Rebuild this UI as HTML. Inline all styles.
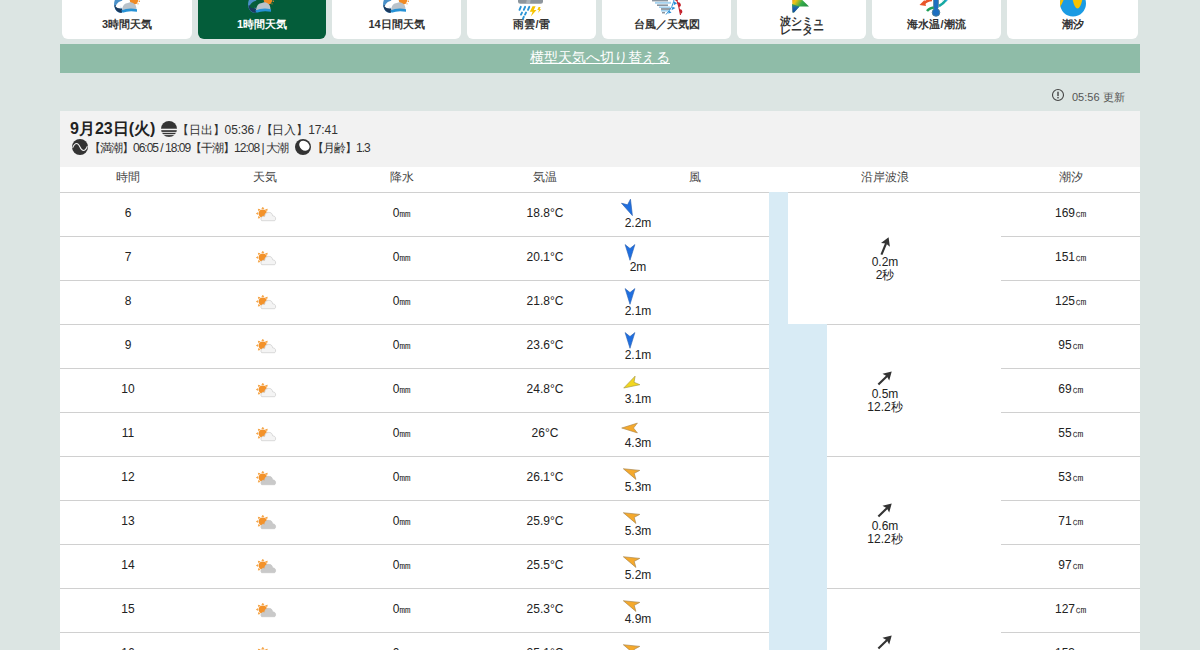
<!DOCTYPE html>
<html><head><meta charset="utf-8">
<style>
*{box-sizing:border-box;margin:0;padding:0}
html,body{width:1200px;height:650px;overflow:hidden;background:#dce5e3;font-family:"Liberation Sans",sans-serif;color:#222}
.wrap{position:absolute;left:60px;top:0;width:1080px;height:650px}
.tab{position:absolute;top:-40px;width:130px;height:79px;background:#fff;border-radius:6px;text-align:center;overflow:hidden}
.tab .lbl{position:absolute;left:0;right:0;top:57px;font-size:11px;font-weight:bold;color:#333;line-height:14px}
.tab .ico{position:absolute;left:50%;top:13px;transform:translateX(-50%);line-height:0}
.tab.on{background:#045d3a}
.tab.on .lbl{color:#fff}
.switch{position:absolute;left:0;top:44px;width:1080px;height:29px;background:#8fbca8;text-align:center}
.switch span{color:#fff;font-size:14px;line-height:26px;text-decoration:underline}
.upd{position:absolute;left:1012px;top:91px;font-size:11px;color:#555;line-height:13px}
.info{position:absolute;left:991px;top:88px}
.hdr{position:absolute;left:0;top:111px;width:1080px;height:56px;background:#f2f2f2}
.d1{position:absolute;left:10px;top:120px;font-size:16px;font-weight:bold;color:#222;line-height:18px}
.d1s{position:absolute;left:117px;top:123px;font-size:12px;color:#333;line-height:14px;white-space:nowrap;letter-spacing:-0.1px}
.d2{position:absolute;left:29px;top:141px;font-size:12px;color:#333;line-height:14px;letter-spacing:-1px;white-space:nowrap}
.tbl{position:absolute;left:0;top:167px;width:1080px;height:500px;background:#fff}
.th{position:absolute;top:167px;font-size:12px;color:#444;line-height:20px;text-align:center}
.c{position:absolute;height:44px;line-height:43px;text-align:center;font-size:12px;color:#222}
.ic{position:absolute;width:24px;height:16px;line-height:0}
.wa{position:absolute}
.ws{position:absolute;font-size:12px;line-height:14px;color:#222;width:100px;text-align:center}
.ln{position:absolute;height:1px;background:#d0d0d0}
.wb{position:absolute;background:#d8ebf5}
.wv{position:absolute;text-align:center;font-size:12px;line-height:12.5px;color:#222}
.warr{position:absolute}
</style></head><body>
<div class="wrap">
  <div class="tab" style="left:2px;width:130px"><div class="lbl" style="">3時間天気</div></div><div class="tab on" style="left:138px;width:128px"><div class="lbl" style="">1時間天気</div></div><div class="tab" style="left:272px;width:129px"><div class="lbl" style="">14日間天気</div></div><div class="tab" style="left:407px;width:129px"><div class="lbl" style="">雨雲/雷</div></div><div class="tab" style="left:542px;width:129px"><div class="lbl" style="">台風／天気図</div></div><div class="tab" style="left:677px;width:129px"><div class="lbl" style="line-height:9px;top:57px">波シミュ<br>レーター</div></div><div class="tab" style="left:812px;width:129px"><div class="lbl" style="">海水温/潮流</div></div><div class="tab" style="left:947px;width:131px"><div class="lbl" style="">潮汐</div></div><div style="position:absolute;left:53px;top:-14px;line-height:0"><svg width="28" height="30" viewBox="0 0 28 30"><path d="M8 8 Q0 12 1.2 20.5 Q2.5 26.5 8.5 27 L10 23.5 Q7.5 22 7.5 18.5 Q7.5 15 11.5 12.5 L12 9Z" fill="#4a90c8"/><path d="M1.3 19.5 Q2.5 26.5 8.5 27 L10 23.5 Q6.5 22.5 5.5 19Z" fill="#1b3a5e"/><path d="M2.5 20.5 Q4.5 14.5 11.5 14.5 Q7.5 17.5 7.8 22.5 Q4 22.5 2.5 20.5Z" fill="#ffffff"/><g fill="#f08a24"><circle cx="21" cy="14.2" r="4.2"/><circle cx="26" cy="12.3" r="0.7"/><circle cx="26.3" cy="15.2" r="0.7"/><circle cx="25" cy="17.8" r="0.6"/></g><path d="M9 24 Q9.8 17.2 15 17 Q17.5 15.2 20.5 17.2 Q23.5 18.5 23.5 24Z" fill="#b9c2ca"/><path d="M8.2 24.6 Q15.5 21.2 24 23.2 L24 25.8 Q16 24.2 9.6 26.8Z" fill="#2692d6"/></svg></div><div style="position:absolute;left:187px;top:-14px;line-height:0"><svg width="28" height="30" viewBox="0 0 28 30"><path d="M8 8 Q0 12 1.2 20.5 Q2.5 26.5 8.5 27 L10 23.5 Q7.5 22 7.5 18.5 Q7.5 15 11.5 12.5 L12 9Z" fill="#4a90c8"/><path d="M1.3 19.5 Q2.5 26.5 8.5 27 L10 23.5 Q6.5 22.5 5.5 19Z" fill="#1b3a5e"/><path d="M2.5 20.5 Q4.5 14.5 11.5 14.5 Q7.5 17.5 7.8 22.5 Q4 22.5 2.5 20.5Z" fill="#075e3b"/><g fill="#f08a24"><circle cx="21" cy="14.2" r="4.2"/><circle cx="26" cy="12.3" r="0.7"/><circle cx="26.3" cy="15.2" r="0.7"/><circle cx="25" cy="17.8" r="0.6"/></g><path d="M9 24 Q9.8 17.2 15 17 Q17.5 15.2 20.5 17.2 Q23.5 18.5 23.5 24Z" fill="#b9c2ca"/><path d="M8.2 24.6 Q15.5 21.2 24 23.2 L24 25.8 Q16 24.2 9.6 26.8Z" fill="#2692d6"/></svg></div><div style="position:absolute;left:322px;top:-14px;line-height:0"><svg width="28" height="30" viewBox="0 0 28 30"><path d="M8 8 Q0 12 1.2 20.5 Q2.5 26.5 8.5 27 L10 23.5 Q7.5 22 7.5 18.5 Q7.5 15 11.5 12.5 L12 9Z" fill="#4a90c8"/><path d="M1.3 19.5 Q2.5 26.5 8.5 27 L10 23.5 Q6.5 22.5 5.5 19Z" fill="#1b3a5e"/><path d="M2.5 20.5 Q4.5 14.5 11.5 14.5 Q7.5 17.5 7.8 22.5 Q4 22.5 2.5 20.5Z" fill="#ffffff"/><g fill="#f08a24"><circle cx="21" cy="14.2" r="4.2"/><circle cx="26" cy="12.3" r="0.7"/><circle cx="26.3" cy="15.2" r="0.7"/><circle cx="25" cy="17.8" r="0.6"/></g><path d="M9 24 Q9.8 17.2 15 17 Q17.5 15.2 20.5 17.2 Q23.5 18.5 23.5 24Z" fill="#b9c2ca"/><path d="M8.2 24.6 Q15.5 21.2 24 23.2 L24 25.8 Q16 24.2 9.6 26.8Z" fill="#2692d6"/></svg></div><div style="position:absolute;left:455px;top:-13px;line-height:0"><svg width="32" height="34" viewBox="0 0 32 34"><rect x="3" y="0" width="25" height="16.7" rx="2.5" fill="#8e969d"/><path d="M14 0 L18 0 L15 16.7 L11 16.7Z" fill="#b6bec5" opacity=".7"/><g stroke="#2a93d5" stroke-width="1.9" stroke-linecap="round"><line x1="4.5" y1="22.8" x2="5.8" y2="19.8"/><line x1="8.8" y1="22.8" x2="10.1" y2="19.8"/><line x1="13" y1="22.8" x2="14.3" y2="19.8"/><line x1="6" y1="27.6" x2="7" y2="25.6"/><line x1="10" y1="27.6" x2="11" y2="25.6"/><line x1="8" y1="31.6" x2="8.8" y2="29.8"/></g><path d="M17.5 19.3 L14.8 24.8 L17.6 24.8 L15.8 29.5 L21.5 23 L18.8 23 L20.6 19.3Z" fill="#f7c400"/><path d="M23.6 20 L22.3 23 L24 23 L23 26 L26.2 22.2 L24.6 22.2 L25.6 20Z" fill="#f7c400"/></svg></div><div style="position:absolute;left:590px;top:-15px;line-height:0"><svg width="36" height="32" viewBox="0 0 36 32"><g stroke-linecap="butt"><line x1="0" y1="11" x2="17" y2="11" stroke="#a6d2ee" stroke-width="2"/><line x1="1" y1="13.5" x2="17" y2="13.5" stroke="#8a959f" stroke-width="1.8"/><line x1="5" y1="17.8" x2="21" y2="17.8" stroke="#a6d2ee" stroke-width="2"/><line x1="2" y1="15.6" x2="18" y2="15.6" stroke="#8a959f" stroke-width="1.6"/><line x1="7" y1="20.2" x2="18" y2="20.2" stroke="#8a959f" stroke-width="1.6"/><line x1="9" y1="22.2" x2="20" y2="22.2" stroke="#a6d2ee" stroke-width="1.6"/><line x1="11" y1="24" x2="20" y2="24" stroke="#8a959f" stroke-width="1.8"/><line x1="11" y1="25.8" x2="19" y2="25.8" stroke="#a6d2ee" stroke-width="1.6"/><line x1="12" y1="27.7" x2="15" y2="27.7" stroke="#8a959f" stroke-width="1.5"/></g><path d="M24.5 12 Q23.5 22 16 29.5" stroke="#2a8fd6" stroke-width="1" fill="none"/><path d="M24 16.5 L27.2 18.2 L23.8 20.2Z M22.5 21.8 L25.5 23 L21.5 25.2Z M19.5 25.8 L21.5 27.8 L18 28.5Z" fill="#2a8fd6"/><path d="M25.5 12 Q29 20 30.5 30" stroke="#c4202a" stroke-width="1.1" fill="none"/><path d="M27.6 17.5 A2.3 2.3 0 0 1 29.2 22 Z" fill="#c4202a"/><path d="M29.6 24.3 A2.3 2.3 0 0 1 30.4 29 Z" fill="#c4202a"/><circle cx="26.5" cy="14.5" r="1.5" fill="#c4202a"/></svg></div><div style="position:absolute;left:730px;top:-14px;line-height:0"><svg width="22" height="28" viewBox="0 0 22 28"><defs><linearGradient id="gw" x1="0" y1="0" x2="1" y2="0.9"><stop offset="0" stop-color="#f0562a"/><stop offset="0.35" stop-color="#f3c315"/><stop offset="0.6" stop-color="#35ad4a"/><stop offset="1" stop-color="#1b7a3c"/></linearGradient><linearGradient id="gb" x1="0" y1="0" x2="0" y2="1"><stop offset="0" stop-color="#35ad4a"/><stop offset="0.45" stop-color="#1e5fb0"/><stop offset="1" stop-color="#0f4c9c"/></linearGradient></defs><path d="M2 4 L19 20.5 L9.5 20.5 L4 26.5 L2.5 26.5 Z" fill="url(#gw)"/><path d="M2 18 L9.5 20.5 L4 26.5 L2.5 26.5 Z" fill="url(#gb)"/></svg></div><div style="position:absolute;left:854px;top:-13px;line-height:0"><svg width="42" height="34" viewBox="0 0 42 34"><path d="M9.5 17 Q13 13 18 13" stroke="#e9552a" stroke-width="2.6" fill="none"/><path d="M5.5 18 L10.5 13 L12 19Z" fill="#e9552a"/><path d="M13 24 Q16 20.5 21 20.5" stroke="#22a05a" stroke-width="2.6" fill="none"/><path d="M25 19 Q29 17 32 13" stroke="#17a9a2" stroke-width="2.6" fill="none"/><path d="M28 12 Q32 11 34 8" stroke="#2aa8e0" stroke-width="2.6" fill="none"/><path d="M31.5 15 L38.5 9.5 L33 7.5Z" fill="#2aa8e0"/><rect x="19.6" y="0" width="4.8" height="22" rx="2.2" fill="#1c6fc2" stroke="#4d7d94" stroke-width="0.8"/><circle cx="22" cy="25.5" r="3.8" fill="#1c6fc2" stroke="#4d7d94" stroke-width="0.9"/><rect x="20.3" y="18" width="3.4" height="6" fill="#1c6fc2"/></svg></div><div style="position:absolute;left:999px;top:-13px;line-height:0"><svg width="28" height="30" viewBox="0 0 28 30"><defs><clipPath id="ct"><circle cx="14" cy="16.5" r="13"/></clipPath></defs><circle cx="14" cy="16.5" r="13" fill="#1a9be3"/><g clip-path="url(#ct)"><path d="M0 0 L0 22 Q3 17 5 12 Q7 4 9.5 4 Q11.5 4 13.5 12 Q15.5 21.5 18.5 21.5 Q21.5 21.5 23.5 12 Q25 6 28 2 L28 0Z" fill="#f7c200"/></g></svg></div>
  <div class="switch"><span>横型天気へ切り替える</span></div>
  <svg class="info" width="14" height="14" viewBox="0 0 14 14"><circle cx="7" cy="7" r="5.5" fill="none" stroke="#444" stroke-width="1.1"/><rect x="6.3" y="3.7" width="1.4" height="4.4" fill="#444"/><rect x="6.3" y="9" width="1.4" height="1.4" fill="#444"/></svg>
  <div class="upd">05:56 更新</div>
  <div class="hdr"></div>
  <div class="d1">9月23日(火)</div>
  <svg style="position:absolute;left:101px;top:121px" width="16" height="16" viewBox="0 0 16 16"><defs><clipPath id="cc"><circle cx="8" cy="8" r="8"/></clipPath></defs><g clip-path="url(#cc)" fill="#333"><rect x="0" y="0" width="16" height="7.7"/><rect x="0" y="9.2" width="16" height="1.7"/><rect x="0" y="11.8" width="16" height="1.4"/><rect x="0" y="14.1" width="16" height="1.8"/></g></svg>
  <div class="d1s">【日出】05:36 /【日入】17:41</div>
  <svg style="position:absolute;left:12px;top:139px" width="16" height="16" viewBox="0 0 16 16"><circle cx="8" cy="8" r="8" fill="#333"/><path d="M0.6 8.8 Q2.5 4.5 4.5 4.5 Q6.5 4.5 8 8 Q9.5 11.5 11.5 11.5 Q13.5 11.5 15.4 7.2" stroke="#f2f2f2" stroke-width="1.1" fill="none"/></svg>
  <div class="d2">【満潮】06:05 / 18:09【干潮】12:08 | 大潮</div>
  <svg style="position:absolute;left:235px;top:139px" width="16" height="16" viewBox="0 0 16 16"><circle cx="8" cy="8" r="8" fill="#333"/><ellipse cx="9.4" cy="6.7" rx="5.6" ry="4.5" transform="rotate(40 9.4 6.7)" fill="#fff"/></svg>
  <div class="d2" style="left:252px">【月齢】1.3</div>
  <div class="tbl"></div>
  <div class="th" style="left:0;width:136px">時間</div>
  <div class="th" style="left:136px;width:138px">天気</div>
  <div class="th" style="left:274px;width:136px">降水</div>
  <div class="th" style="left:410px;width:150px">気温</div>
  <div class="th" style="left:560px;width:149px">風</div>
  <div class="th" style="left:709px;width:232px">沿岸波浪</div>
  <div class="th" style="left:941px;width:139px">潮汐</div>
  <div class="ln" style="left:0;width:1080px;top:192px"></div>
  <div class="wb" style="left:709px;top:192px;width:19px;height:132px"></div><svg class="warr" style="left:813.4px;top:233.5px" width="24" height="24" viewBox="-12 -12 24 24"><g transform="rotate(22.5)"><path d="M0,9.3 L0,-3" stroke="#333" stroke-width="2.1" fill="none"/><path d="M0,-9.4 L4.8,-1.2 L0,-2.6 L-4.8,-1.2 Z" fill="#333"/></g></svg><div class="wv" style="left:709px;width:232px;top:256px">0.2m<br>2秒</div><div class="ln" style="left:709px;width:232px;top:324px"></div><div class="wb" style="left:709px;top:324px;width:58px;height:132px"></div><svg class="warr" style="left:813.4px;top:365.5px" width="24" height="24" viewBox="-12 -12 24 24"><g transform="rotate(45.5)"><path d="M0,9.3 L0,-3" stroke="#333" stroke-width="2.1" fill="none"/><path d="M0,-9.4 L4.8,-1.2 L0,-2.6 L-4.8,-1.2 Z" fill="#333"/></g></svg><div class="wv" style="left:709px;width:232px;top:388px">0.5m<br>12.2秒</div><div class="ln" style="left:709px;width:232px;top:456px"></div><div class="wb" style="left:709px;top:456px;width:58px;height:132px"></div><svg class="warr" style="left:813.4px;top:497.5px" width="24" height="24" viewBox="-12 -12 24 24"><g transform="rotate(45.5)"><path d="M0,9.3 L0,-3" stroke="#333" stroke-width="2.1" fill="none"/><path d="M0,-9.4 L4.8,-1.2 L0,-2.6 L-4.8,-1.2 Z" fill="#333"/></g></svg><div class="wv" style="left:709px;width:232px;top:520px">0.6m<br>12.2秒</div><div class="ln" style="left:709px;width:232px;top:588px"></div><div class="wb" style="left:709px;top:588px;width:58px;height:132px"></div><svg class="warr" style="left:813.4px;top:629.5px" width="24" height="24" viewBox="-12 -12 24 24"><g transform="rotate(45.5)"><path d="M0,9.3 L0,-3" stroke="#333" stroke-width="2.1" fill="none"/><path d="M0,-9.4 L4.8,-1.2 L0,-2.6 L-4.8,-1.2 Z" fill="#333"/></g></svg><div class="wv" style="left:709px;width:232px;top:652px">0.6m<br>12.2秒</div><div class="ln" style="left:709px;width:232px;top:720px"></div>
  <div class="c t" style="left:0;width:136px;top:192px">6</div><div class="ic" style="left:195px;top:207px"><svg width="24" height="16" viewBox="0 0 24 16"><g fill="#f5a649"><path d="M14.80,6.60 L12.40,8.10 L12.40,5.10Z"/><path d="M12.75,11.55 L9.99,10.91 L12.11,8.79Z"/><path d="M7.80,13.60 L6.30,11.20 L9.30,11.20Z"/><path d="M2.85,11.55 L3.49,8.79 L5.61,10.91Z"/><path d="M0.80,6.60 L3.20,5.10 L3.20,8.10Z"/><path d="M2.85,1.65 L5.61,2.29 L3.49,4.41Z"/><path d="M7.80,-0.40 L9.30,2.00 L6.30,2.00Z"/><path d="M12.75,1.65 L12.11,4.41 L9.99,2.29Z"/></g><circle cx="7.8" cy="6.6" r="4.1" fill="#f3922a"/><path d="M6.6 13.7 A2.7 2.7 0 0 1 9.6 9.4 A4.02 4.02 0 0 1 17.6 8.8 A2.8 2.8 0 0 1 19.7 13.7 Z" fill="#f4f4f4" stroke="#cdcdcd" stroke-width="0.7"/></svg></div><div class="c t" style="left:274px;width:136px;top:192px">0㎜</div><div class="c t" style="left:410px;width:150px;top:192px">18.8°C</div><svg class="wa" style="left:559.2px;top:198px" width="20" height="20" viewBox="-10 -10 20 20"><path d="M0,-8.3 L4.9,7.4 L0,3.5 L-4.9,7.4 Z" fill="#1f6fe0" stroke="#2a5fae" stroke-width="0.6" stroke-linejoin="round" transform="rotate(156)"/></svg><div class="ws" style="left:528px;top:216px">2.2m</div><div class="c t" style="left:942px;width:138px;top:192px">169㎝</div><div class="ln" style="left:0;width:709px;top:236px"></div><div class="ln" style="left:941px;width:139px;top:236px"></div><div class="c t" style="left:0;width:136px;top:236px">7</div><div class="ic" style="left:195px;top:251px"><svg width="24" height="16" viewBox="0 0 24 16"><g fill="#f5a649"><path d="M14.80,6.60 L12.40,8.10 L12.40,5.10Z"/><path d="M12.75,11.55 L9.99,10.91 L12.11,8.79Z"/><path d="M7.80,13.60 L6.30,11.20 L9.30,11.20Z"/><path d="M2.85,11.55 L3.49,8.79 L5.61,10.91Z"/><path d="M0.80,6.60 L3.20,5.10 L3.20,8.10Z"/><path d="M2.85,1.65 L5.61,2.29 L3.49,4.41Z"/><path d="M7.80,-0.40 L9.30,2.00 L6.30,2.00Z"/><path d="M12.75,1.65 L12.11,4.41 L9.99,2.29Z"/></g><circle cx="7.8" cy="6.6" r="4.1" fill="#f3922a"/><path d="M6.6 13.7 A2.7 2.7 0 0 1 9.6 9.4 A4.02 4.02 0 0 1 17.6 8.8 A2.8 2.8 0 0 1 19.7 13.7 Z" fill="#f4f4f4" stroke="#cdcdcd" stroke-width="0.7"/></svg></div><div class="c t" style="left:274px;width:136px;top:236px">0㎜</div><div class="c t" style="left:410px;width:150px;top:236px">20.1°C</div><svg class="wa" style="left:559.5px;top:242px" width="20" height="20" viewBox="-10 -10 20 20"><path d="M0,-8.3 L4.9,7.4 L0,3.5 L-4.9,7.4 Z" fill="#1f6fe0" stroke="#2a5fae" stroke-width="0.6" stroke-linejoin="round" transform="rotate(180)"/></svg><div class="ws" style="left:528px;top:260px">2m</div><div class="c t" style="left:942px;width:138px;top:236px">151㎝</div><div class="ln" style="left:0;width:709px;top:280px"></div><div class="ln" style="left:941px;width:139px;top:280px"></div><div class="c t" style="left:0;width:136px;top:280px">8</div><div class="ic" style="left:195px;top:295px"><svg width="24" height="16" viewBox="0 0 24 16"><g fill="#f5a649"><path d="M14.80,6.60 L12.40,8.10 L12.40,5.10Z"/><path d="M12.75,11.55 L9.99,10.91 L12.11,8.79Z"/><path d="M7.80,13.60 L6.30,11.20 L9.30,11.20Z"/><path d="M2.85,11.55 L3.49,8.79 L5.61,10.91Z"/><path d="M0.80,6.60 L3.20,5.10 L3.20,8.10Z"/><path d="M2.85,1.65 L5.61,2.29 L3.49,4.41Z"/><path d="M7.80,-0.40 L9.30,2.00 L6.30,2.00Z"/><path d="M12.75,1.65 L12.11,4.41 L9.99,2.29Z"/></g><circle cx="7.8" cy="6.6" r="4.1" fill="#f3922a"/><path d="M6.6 13.7 A2.7 2.7 0 0 1 9.6 9.4 A4.02 4.02 0 0 1 17.6 8.8 A2.8 2.8 0 0 1 19.7 13.7 Z" fill="#f4f4f4" stroke="#cdcdcd" stroke-width="0.7"/></svg></div><div class="c t" style="left:274px;width:136px;top:280px">0㎜</div><div class="c t" style="left:410px;width:150px;top:280px">21.8°C</div><svg class="wa" style="left:559.5px;top:286px" width="20" height="20" viewBox="-10 -10 20 20"><path d="M0,-8.3 L4.9,7.4 L0,3.5 L-4.9,7.4 Z" fill="#1f6fe0" stroke="#2a5fae" stroke-width="0.6" stroke-linejoin="round" transform="rotate(180)"/></svg><div class="ws" style="left:528px;top:304px">2.1m</div><div class="c t" style="left:942px;width:138px;top:280px">125㎝</div><div class="ln" style="left:0;width:709px;top:324px"></div><div class="ln" style="left:941px;width:139px;top:324px"></div><div class="c t" style="left:0;width:136px;top:324px">9</div><div class="ic" style="left:195px;top:339px"><svg width="24" height="16" viewBox="0 0 24 16"><g fill="#f5a649"><path d="M14.80,6.60 L12.40,8.10 L12.40,5.10Z"/><path d="M12.75,11.55 L9.99,10.91 L12.11,8.79Z"/><path d="M7.80,13.60 L6.30,11.20 L9.30,11.20Z"/><path d="M2.85,11.55 L3.49,8.79 L5.61,10.91Z"/><path d="M0.80,6.60 L3.20,5.10 L3.20,8.10Z"/><path d="M2.85,1.65 L5.61,2.29 L3.49,4.41Z"/><path d="M7.80,-0.40 L9.30,2.00 L6.30,2.00Z"/><path d="M12.75,1.65 L12.11,4.41 L9.99,2.29Z"/></g><circle cx="7.8" cy="6.6" r="4.1" fill="#f3922a"/><path d="M6.6 13.7 A2.7 2.7 0 0 1 9.6 9.4 A4.02 4.02 0 0 1 17.6 8.8 A2.8 2.8 0 0 1 19.7 13.7 Z" fill="#f4f4f4" stroke="#cdcdcd" stroke-width="0.7"/></svg></div><div class="c t" style="left:274px;width:136px;top:324px">0㎜</div><div class="c t" style="left:410px;width:150px;top:324px">23.6°C</div><svg class="wa" style="left:559.5px;top:330px" width="20" height="20" viewBox="-10 -10 20 20"><path d="M0,-8.3 L4.9,7.4 L0,3.5 L-4.9,7.4 Z" fill="#1f6fe0" stroke="#2a5fae" stroke-width="0.6" stroke-linejoin="round" transform="rotate(180)"/></svg><div class="ws" style="left:528px;top:348px">2.1m</div><div class="c t" style="left:942px;width:138px;top:324px">95㎝</div><div class="ln" style="left:0;width:709px;top:368px"></div><div class="ln" style="left:941px;width:139px;top:368px"></div><div class="c t" style="left:0;width:136px;top:368px">10</div><div class="ic" style="left:195px;top:383px"><svg width="24" height="16" viewBox="0 0 24 16"><g fill="#f5a649"><path d="M14.80,6.60 L12.40,8.10 L12.40,5.10Z"/><path d="M12.75,11.55 L9.99,10.91 L12.11,8.79Z"/><path d="M7.80,13.60 L6.30,11.20 L9.30,11.20Z"/><path d="M2.85,11.55 L3.49,8.79 L5.61,10.91Z"/><path d="M0.80,6.60 L3.20,5.10 L3.20,8.10Z"/><path d="M2.85,1.65 L5.61,2.29 L3.49,4.41Z"/><path d="M7.80,-0.40 L9.30,2.00 L6.30,2.00Z"/><path d="M12.75,1.65 L12.11,4.41 L9.99,2.29Z"/></g><circle cx="7.8" cy="6.6" r="4.1" fill="#f3922a"/><path d="M6.6 13.7 A2.7 2.7 0 0 1 9.6 9.4 A4.02 4.02 0 0 1 17.6 8.8 A2.8 2.8 0 0 1 19.7 13.7 Z" fill="#f4f4f4" stroke="#cdcdcd" stroke-width="0.7"/></svg></div><div class="c t" style="left:274px;width:136px;top:368px">0㎜</div><div class="c t" style="left:410px;width:150px;top:368px">24.8°C</div><svg class="wa" style="left:561px;top:374px" width="20" height="20" viewBox="-10 -10 20 20"><path d="M0,-8.3 L4.9,7.4 L0,3.5 L-4.9,7.4 Z" fill="#f2d61e" stroke="#a89a40" stroke-width="0.6" stroke-linejoin="round" transform="rotate(241)"/></svg><div class="ws" style="left:528px;top:392px">3.1m</div><div class="c t" style="left:942px;width:138px;top:368px">69㎝</div><div class="ln" style="left:0;width:709px;top:412px"></div><div class="ln" style="left:941px;width:139px;top:412px"></div><div class="c t" style="left:0;width:136px;top:412px">11</div><div class="ic" style="left:195px;top:427px"><svg width="24" height="16" viewBox="0 0 24 16"><g fill="#f5a649"><path d="M14.80,6.60 L12.40,8.10 L12.40,5.10Z"/><path d="M12.75,11.55 L9.99,10.91 L12.11,8.79Z"/><path d="M7.80,13.60 L6.30,11.20 L9.30,11.20Z"/><path d="M2.85,11.55 L3.49,8.79 L5.61,10.91Z"/><path d="M0.80,6.60 L3.20,5.10 L3.20,8.10Z"/><path d="M2.85,1.65 L5.61,2.29 L3.49,4.41Z"/><path d="M7.80,-0.40 L9.30,2.00 L6.30,2.00Z"/><path d="M12.75,1.65 L12.11,4.41 L9.99,2.29Z"/></g><circle cx="7.8" cy="6.6" r="4.1" fill="#f3922a"/><path d="M6.6 13.7 A2.7 2.7 0 0 1 9.6 9.4 A4.02 4.02 0 0 1 17.6 8.8 A2.8 2.8 0 0 1 19.7 13.7 Z" fill="#f4f4f4" stroke="#cdcdcd" stroke-width="0.7"/></svg></div><div class="c t" style="left:274px;width:136px;top:412px">0㎜</div><div class="c t" style="left:410px;width:150px;top:412px">26°C</div><svg class="wa" style="left:560px;top:418px" width="20" height="20" viewBox="-10 -10 20 20"><path d="M0,-8.3 L4.9,7.4 L0,3.5 L-4.9,7.4 Z" fill="#f5a92c" stroke="#a8844a" stroke-width="0.6" stroke-linejoin="round" transform="rotate(270)"/></svg><div class="ws" style="left:528px;top:436px">4.3m</div><div class="c t" style="left:942px;width:138px;top:412px">55㎝</div><div class="ln" style="left:0;width:709px;top:456px"></div><div class="ln" style="left:941px;width:139px;top:456px"></div><div class="c t" style="left:0;width:136px;top:456px">12</div><div class="ic" style="left:195px;top:471px"><svg width="24" height="16" viewBox="0 0 24 16"><g fill="#f5a649"><path d="M14.80,6.60 L12.40,8.10 L12.40,5.10Z"/><path d="M12.75,11.55 L9.99,10.91 L12.11,8.79Z"/><path d="M7.80,13.60 L6.30,11.20 L9.30,11.20Z"/><path d="M2.85,11.55 L3.49,8.79 L5.61,10.91Z"/><path d="M0.80,6.60 L3.20,5.10 L3.20,8.10Z"/><path d="M2.85,1.65 L5.61,2.29 L3.49,4.41Z"/><path d="M7.80,-0.40 L9.30,2.00 L6.30,2.00Z"/><path d="M12.75,1.65 L12.11,4.41 L9.99,2.29Z"/></g><circle cx="7.8" cy="6.6" r="4.1" fill="#f3922a"/><path d="M6.6 13.7 A2.7 2.7 0 0 1 9.6 9.4 A4.02 4.02 0 0 1 17.6 8.8 A2.8 2.8 0 0 1 19.7 13.7 Z" fill="#c9c9c9" stroke="#c6c6c6" stroke-width="0.7"/></svg></div><div class="c t" style="left:274px;width:136px;top:456px">0㎜</div><div class="c t" style="left:410px;width:150px;top:456px">26.1°C</div><svg class="wa" style="left:561px;top:461.5px" width="20" height="20" viewBox="-10 -10 20 20"><path d="M0,-8.3 L4.9,7.4 L0,3.5 L-4.9,7.4 Z" fill="#f5a92c" stroke="#a8844a" stroke-width="0.6" stroke-linejoin="round" transform="rotate(293)"/></svg><div class="ws" style="left:528px;top:480px">5.3m</div><div class="c t" style="left:942px;width:138px;top:456px">53㎝</div><div class="ln" style="left:0;width:709px;top:500px"></div><div class="ln" style="left:941px;width:139px;top:500px"></div><div class="c t" style="left:0;width:136px;top:500px">13</div><div class="ic" style="left:195px;top:515px"><svg width="24" height="16" viewBox="0 0 24 16"><g fill="#f5a649"><path d="M14.80,6.60 L12.40,8.10 L12.40,5.10Z"/><path d="M12.75,11.55 L9.99,10.91 L12.11,8.79Z"/><path d="M7.80,13.60 L6.30,11.20 L9.30,11.20Z"/><path d="M2.85,11.55 L3.49,8.79 L5.61,10.91Z"/><path d="M0.80,6.60 L3.20,5.10 L3.20,8.10Z"/><path d="M2.85,1.65 L5.61,2.29 L3.49,4.41Z"/><path d="M7.80,-0.40 L9.30,2.00 L6.30,2.00Z"/><path d="M12.75,1.65 L12.11,4.41 L9.99,2.29Z"/></g><circle cx="7.8" cy="6.6" r="4.1" fill="#f3922a"/><path d="M6.6 13.7 A2.7 2.7 0 0 1 9.6 9.4 A4.02 4.02 0 0 1 17.6 8.8 A2.8 2.8 0 0 1 19.7 13.7 Z" fill="#c9c9c9" stroke="#c6c6c6" stroke-width="0.7"/></svg></div><div class="c t" style="left:274px;width:136px;top:500px">0㎜</div><div class="c t" style="left:410px;width:150px;top:500px">25.9°C</div><svg class="wa" style="left:561px;top:505.5px" width="20" height="20" viewBox="-10 -10 20 20"><path d="M0,-8.3 L4.9,7.4 L0,3.5 L-4.9,7.4 Z" fill="#f5a92c" stroke="#a8844a" stroke-width="0.6" stroke-linejoin="round" transform="rotate(293)"/></svg><div class="ws" style="left:528px;top:524px">5.3m</div><div class="c t" style="left:942px;width:138px;top:500px">71㎝</div><div class="ln" style="left:0;width:709px;top:544px"></div><div class="ln" style="left:941px;width:139px;top:544px"></div><div class="c t" style="left:0;width:136px;top:544px">14</div><div class="ic" style="left:195px;top:559px"><svg width="24" height="16" viewBox="0 0 24 16"><g fill="#f5a649"><path d="M14.80,6.60 L12.40,8.10 L12.40,5.10Z"/><path d="M12.75,11.55 L9.99,10.91 L12.11,8.79Z"/><path d="M7.80,13.60 L6.30,11.20 L9.30,11.20Z"/><path d="M2.85,11.55 L3.49,8.79 L5.61,10.91Z"/><path d="M0.80,6.60 L3.20,5.10 L3.20,8.10Z"/><path d="M2.85,1.65 L5.61,2.29 L3.49,4.41Z"/><path d="M7.80,-0.40 L9.30,2.00 L6.30,2.00Z"/><path d="M12.75,1.65 L12.11,4.41 L9.99,2.29Z"/></g><circle cx="7.8" cy="6.6" r="4.1" fill="#f3922a"/><path d="M6.6 13.7 A2.7 2.7 0 0 1 9.6 9.4 A4.02 4.02 0 0 1 17.6 8.8 A2.8 2.8 0 0 1 19.7 13.7 Z" fill="#c9c9c9" stroke="#c6c6c6" stroke-width="0.7"/></svg></div><div class="c t" style="left:274px;width:136px;top:544px">0㎜</div><div class="c t" style="left:410px;width:150px;top:544px">25.5°C</div><svg class="wa" style="left:561px;top:549.5px" width="20" height="20" viewBox="-10 -10 20 20"><path d="M0,-8.3 L4.9,7.4 L0,3.5 L-4.9,7.4 Z" fill="#f5a92c" stroke="#a8844a" stroke-width="0.6" stroke-linejoin="round" transform="rotate(293)"/></svg><div class="ws" style="left:528px;top:568px">5.2m</div><div class="c t" style="left:942px;width:138px;top:544px">97㎝</div><div class="ln" style="left:0;width:709px;top:588px"></div><div class="ln" style="left:941px;width:139px;top:588px"></div><div class="c t" style="left:0;width:136px;top:588px">15</div><div class="ic" style="left:195px;top:603px"><svg width="24" height="16" viewBox="0 0 24 16"><g fill="#f5a649"><path d="M14.80,6.60 L12.40,8.10 L12.40,5.10Z"/><path d="M12.75,11.55 L9.99,10.91 L12.11,8.79Z"/><path d="M7.80,13.60 L6.30,11.20 L9.30,11.20Z"/><path d="M2.85,11.55 L3.49,8.79 L5.61,10.91Z"/><path d="M0.80,6.60 L3.20,5.10 L3.20,8.10Z"/><path d="M2.85,1.65 L5.61,2.29 L3.49,4.41Z"/><path d="M7.80,-0.40 L9.30,2.00 L6.30,2.00Z"/><path d="M12.75,1.65 L12.11,4.41 L9.99,2.29Z"/></g><circle cx="7.8" cy="6.6" r="4.1" fill="#f3922a"/><path d="M6.6 13.7 A2.7 2.7 0 0 1 9.6 9.4 A4.02 4.02 0 0 1 17.6 8.8 A2.8 2.8 0 0 1 19.7 13.7 Z" fill="#c9c9c9" stroke="#c6c6c6" stroke-width="0.7"/></svg></div><div class="c t" style="left:274px;width:136px;top:588px">0㎜</div><div class="c t" style="left:410px;width:150px;top:588px">25.3°C</div><svg class="wa" style="left:561px;top:593.5px" width="20" height="20" viewBox="-10 -10 20 20"><path d="M0,-8.3 L4.9,7.4 L0,3.5 L-4.9,7.4 Z" fill="#f5a92c" stroke="#a8844a" stroke-width="0.6" stroke-linejoin="round" transform="rotate(293)"/></svg><div class="ws" style="left:528px;top:612px">4.9m</div><div class="c t" style="left:942px;width:138px;top:588px">127㎝</div><div class="ln" style="left:0;width:709px;top:632px"></div><div class="ln" style="left:941px;width:139px;top:632px"></div><div class="c t" style="left:0;width:136px;top:632px">16</div><div class="ic" style="left:195px;top:647px"><svg width="24" height="16" viewBox="0 0 24 16"><g fill="#f5a649"><path d="M14.80,6.60 L12.40,8.10 L12.40,5.10Z"/><path d="M12.75,11.55 L9.99,10.91 L12.11,8.79Z"/><path d="M7.80,13.60 L6.30,11.20 L9.30,11.20Z"/><path d="M2.85,11.55 L3.49,8.79 L5.61,10.91Z"/><path d="M0.80,6.60 L3.20,5.10 L3.20,8.10Z"/><path d="M2.85,1.65 L5.61,2.29 L3.49,4.41Z"/><path d="M7.80,-0.40 L9.30,2.00 L6.30,2.00Z"/><path d="M12.75,1.65 L12.11,4.41 L9.99,2.29Z"/></g><circle cx="7.8" cy="6.6" r="4.1" fill="#f3922a"/><path d="M6.6 13.7 A2.7 2.7 0 0 1 9.6 9.4 A4.02 4.02 0 0 1 17.6 8.8 A2.8 2.8 0 0 1 19.7 13.7 Z" fill="#c9c9c9" stroke="#c6c6c6" stroke-width="0.7"/></svg></div><div class="c t" style="left:274px;width:136px;top:632px">0㎜</div><div class="c t" style="left:410px;width:150px;top:632px">25.1°C</div><svg class="wa" style="left:561px;top:637.5px" width="20" height="20" viewBox="-10 -10 20 20"><path d="M0,-8.3 L4.9,7.4 L0,3.5 L-4.9,7.4 Z" fill="#f5a92c" stroke="#a8844a" stroke-width="0.6" stroke-linejoin="round" transform="rotate(293)"/></svg><div class="ws" style="left:528px;top:656px">4.6m</div><div class="c t" style="left:942px;width:138px;top:632px">153㎝</div><div class="ln" style="left:0;width:709px;top:676px"></div><div class="ln" style="left:941px;width:139px;top:676px"></div>
</div>
</body></html>
